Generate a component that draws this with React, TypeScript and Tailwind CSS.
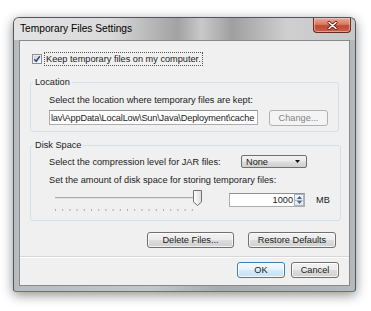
import React from "react";

const btn =
  "flex items-center justify-center rounded-[3px] border border-[#707070] bg-[linear-gradient(#f2f2f2_0%,#ebebeb_48%,#dddddd_52%,#cfcfcf_100%)] shadow-[inset_0_0_0_1px_rgba(255,255,255,0.75)] text-[#1a1a1a]";

const Checkbox = () => (
  <svg width="10" height="10" viewBox="0 0 10 10">
    <defs>
      <linearGradient id="cb" x1="0" y1="0" x2="1" y2="1">
        <stop offset="0" stopColor="#c9ced6" />
        <stop offset="1" stopColor="#f7f8f9" />
      </linearGradient>
    </defs>
    <rect x="0.5" y="0.5" width="9" height="9" fill="#fff" stroke="#8e8f8f" />
    <rect x="1.5" y="1.5" width="7" height="7" fill="url(#cb)" />
    <path d="M2.3 5.2 L4.2 7.3 L7.8 2.3" fill="none" stroke="#2a4a8f" strokeWidth="1.5" />
  </svg>
);

const Slider = () => {
  const ticks = Array.from({ length: 20 }, (_, i) => 2.5 + i * 7.2);
  return (
    <svg width="152" height="22" viewBox="0 0 152 22">
      <defs>
        <linearGradient id="th" x1="0" y1="0" x2="1" y2="0">
          <stop offset="0" stopColor="#ffffff" />
          <stop offset="1" stopColor="#dcdcdc" />
        </linearGradient>
      </defs>
      <line x1="2" x2="148" y1="7.5" y2="7.5" stroke="#a8a8a8" />
      <line x1="2" x2="148" y1="8.5" y2="8.5" stroke="#e4e4e4" />
      {ticks.map((x) => (
        <line key={x} x1={x} x2={x} y1="19" y2="21" stroke="#a4a4a4" strokeWidth="0.9" />
      ))}
      <path d="M140.5 0.5 h8 v11.5 l-4 3.5 l-4 -3.5 z" fill="url(#th)" stroke="#707070" />
    </svg>
  );
};

const CloseButton = () => (
  <div className="flex h-[15px] w-[38px] items-center justify-center rounded-b-[4px] border border-t-0 border-[#6b2a20] bg-[linear-gradient(#e9a999_0%,#d77a66_45%,#c24a33_55%,#c9604a_100%)] shadow-[inset_0_0_0_1px_rgba(255,220,210,0.5)]">
    <svg width="11" height="9" viewBox="0 0 11 9">
      <path d="M2 1.5 L9 7.5 M9 1.5 L2 7.5" stroke="#5a1d14" strokeWidth="3" strokeLinecap="round" />
      <path d="M2 1.5 L9 7.5 M9 1.5 L2 7.5" stroke="#ffffff" strokeWidth="1.6" strokeLinecap="round" />
    </svg>
  </div>
);

export default function App() {
  return (
    <div className="min-h-screen bg-white pl-[13px] pt-[17px] font-['Liberation_Sans',Arial,sans-serif] text-[9.2px] text-[#1a1a1a]">
      <div className="w-[343px] rounded-t-[6px] rounded-b-[3px] border border-[#51565c] border-b-[#3f8197] bg-[linear-gradient(90deg,#b9bcbf_0%,#c4c6c8_40%,#a9abad_60%,#b6b9bc_100%)] shadow-[0_3px_12px_rgba(0,0,0,0.45)]">
        {/* title bar */}
        <div className="flex h-[22px] items-start justify-between rounded-t-[5px] bg-[linear-gradient(90deg,#e3e3e3_0%,#dadada_28%,#b8b8b8_40%,#a2a2a2_48%,#c9c9c9_55%,#9f9f9f_64%,#cfcfcf_80%,#c7c7c7_100%)] pl-[6px] pr-[4px]">
          <span className="mt-[5px] text-[10.2px] leading-[12px] text-black">Temporary Files Settings</span>
          <CloseButton />
        </div>

        {/* client */}
        <div className="mx-[5px] mb-[5px] flex h-[246px] flex-col border border-[#868b90] bg-[#f0f0f0] px-[10px] leading-[12px]">
          <div className="mt-[12px] flex h-[12px] items-center pl-[2px]">
            <Checkbox />
            <span className="ml-[2px] border border-dotted border-[#555] px-[1px]">Keep temporary files on my computer.</span>
          </div>

          <fieldset className="mt-[11px] rounded-[3px] border border-[#d5dfe5] pl-[18px] pr-[10px] pb-[5px]">
            <legend className="-ml-[16px] px-[2px] leading-[12px]">Location</legend>
            <div className="mt-[6px]">Select the location where temporary files are kept:</div>
            <div className="mt-[4px] flex items-start">
              <div className="flex h-[15px] w-[209px] items-center whitespace-nowrap border border-[#abadb3] border-t-[#8e8f8f] bg-white pl-[1px] tracking-[-0.17px]">
                lav\AppData\LocalLow\Sun\Java\Deployment\cache
              </div>
              <div className="ml-[11px] flex h-[16px] w-[59px] items-center justify-center rounded-[3px] border border-[#adb2b5] bg-[#f4f4f4] text-[#838383]">
                Change...
              </div>
            </div>
          </fieldset>

          <fieldset className="mt-[7px] rounded-[3px] border border-[#d5dfe5] pl-[18px] pr-[10px] pb-[8px]">
            <legend className="-ml-[16px] px-[2px] leading-[12px]">Disk Space</legend>
            <div className="mt-[4px] flex h-[13px] items-center">
              <span className="w-[192px]">Select the compression level for JAR files:</span>
              <div className="flex h-[13px] w-[66px] items-center justify-between rounded-[2px] border border-[#707070] bg-[linear-gradient(#f2f2f2_0%,#ebebeb_48%,#dddddd_52%,#cfcfcf_100%)] pl-[4px] pr-[6px]">
                <span>None</span>
                <svg width="5" height="3" viewBox="0 0 5 3">
                  <path d="M0 0 H5 L2.5 3 Z" fill="#111" />
                </svg>
              </div>
            </div>
            <div className="mt-[6px]">Set the amount of disk space for storing temporary files:</div>
            <div className="mt-[4px] flex items-start">
              <div className="ml-[4px]">
                <Slider />
              </div>
              <div className="ml-[24px] mt-[3px] flex h-[14px] w-[76px] items-stretch border border-[#abadb3] border-t-[#8e8f8f] bg-white">
                <div className="flex flex-1 items-center justify-end pr-[1px]">1000</div>
                <div className="flex w-[10px] flex-col">
                  <div className="flex flex-1 items-center justify-center border border-[#a9b6c4] bg-[linear-gradient(#f3f7fb,#dfe7ef)]">
                    <svg width="5" height="3" viewBox="0 0 5 3">
                      <path d="M0 3 H5 L2.5 0 Z" fill="#4d6185" />
                    </svg>
                  </div>
                  <div className="flex flex-1 items-center justify-center border border-t-0 border-[#a9b6c4] bg-[linear-gradient(#f3f7fb,#dfe7ef)]">
                    <svg width="5" height="3" viewBox="0 0 5 3">
                      <path d="M0 0 H5 L2.5 3 Z" fill="#4d6185" />
                    </svg>
                  </div>
                </div>
              </div>
              <span className="ml-[11px] mt-[4px]">MB</span>
            </div>
          </fieldset>

          <div className="mt-[11px] flex justify-end gap-[14px] pr-[3px]">
            <div className={`${btn} h-[16px] w-[87px]`}>Delete Files...</div>
            <div className={`${btn} h-[16px] w-[88px]`}>Restore Defaults</div>
          </div>

          <div className="-mx-[10px] mt-[8px] border-t border-[#d7d7d7] shadow-[0_1px_0_#ffffff]" />

          <div className="mt-[5px] flex justify-end gap-[6px]">
            <div className="flex h-[16px] w-[48px] items-center justify-center rounded-[3px] border border-[#3c7fb1] bg-[linear-gradient(#f4fafd_0%,#e6f3fb_48%,#d4eaf8_52%,#c4e1f3_100%)] shadow-[inset_0_0_0_1px_rgba(255,255,255,0.8)]">
              OK
            </div>
            <div className={`${btn} h-[16px] w-[48px]`}>Cancel</div>
          </div>
        </div>
      </div>
    </div>
  );
}
